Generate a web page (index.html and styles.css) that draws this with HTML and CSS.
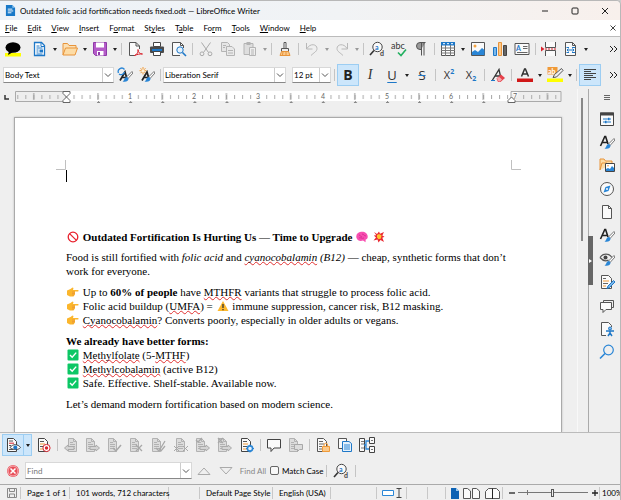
FILE: index.html
```html
<!DOCTYPE html>
<html lang="en">
<head>
  <meta charset="UTF-8">
  <meta name="viewport" content="width=device-width, initial-scale=1">
  <title>Outdated folic acid fortification needs fixed.odt — LibreOffice Writer</title>
  <link rel="stylesheet" href="styles.css">
</head>
<body>

<!-- icon sprite -->
<svg class="sprite" aria-hidden="true">
  <symbol id="page" viewBox="0 0 16 16"><path d="M3.500 1.500h6l3 3v10h-9z" fill="#fafafa" stroke="#555"/><path d="M9.500 1.500v3h3" fill="none" stroke="#555"/></symbol>
  <symbol id="bubble-note" viewBox="0 0 16 16"><path d="M0 12h16v3.500H0z" fill="#ff0"/><ellipse cx="8" cy="6.500" rx="7.500" ry="5.300" fill="#000"/><path d="M4 10l-1 4 5-3z"/></symbol>
  <symbol id="writer" viewBox="0 0 16 16"><path d="M2.500 1.500h7l3 3v10h-10z" fill="#fff" stroke="#1e78c8" stroke-width="1.300"/><path d="M9 1.500v4h4M4.500 5h3M4.500 7h6M4.500 9h2M4.500 11h2M4.500 13h6" fill="none" stroke="#1e78c8"/><path d="M7.500 8.500h3.500v3h-3.500z" fill="#1e78c8"/></symbol>
  <symbol id="folder" viewBox="0 0 16 16"><path d="M1 14V2.500h4.500l1.500 2h7V7" fill="#fbe0b5" stroke="#e8943a"/><path d="M1 14L3.500 7H15.500L13 14z" fill="#fddca6" stroke="#e8943a"/></symbol>
  <symbol id="save" viewBox="0 0 16 16"><path d="M1.500 1.500h13v13h-11l-2-2z" fill="#b45cc8" stroke="#8e3aa8"/><path d="M4 1.500h8v5H4z" fill="#fff"/><path d="M5 10h6.500v4.500H5z" fill="#fff"/><path d="M6 11h2v3H6z" fill="#8e3aa8"/></symbol>
  <symbol id="pdf" viewBox="0 0 16 16"><path d="M12.500 8V5l-3.500-3.500H2.500v13H8" fill="#fafafa" stroke="#555"/><path d="M9 1.500V5h3.500" fill="none" stroke="#555"/><path d="M7.500 14.500c3-1 4-4 3.500-6 0 3 2 4.500 4.500 4.500-2.500-.3-5 .3-8 1.500z" fill="#fff" stroke="#d8242e"/></symbol>
  <symbol id="print" viewBox="0 0 16 16"><path d="M4.500 1.500h7v4h-7z" fill="#fff" stroke="#444"/><rect x="1" y="5.500" width="14" height="6.500" rx="1" fill="#4a4a4a"/><path d="M3 8h10v2H3z" fill="#1e78c8"/><path d="M4.500 10.500h7v4h-7z" fill="#fff" stroke="#444"/></symbol>
  <symbol id="preview" viewBox="0 0 16 16"><path d="M12.500 7V4.500l-3-3h-8v13H9" fill="#fafafa" stroke="#555"/><path d="M9.500 1.500v3h3" fill="none" stroke="#555"/><circle cx="9" cy="9" r="3.200" fill="#e4f1fc" stroke="#1e78c8"/><path d="M11.500 11.500l3.500 3.500" stroke="#1e78c8" stroke-width="1.600"/></symbol>
  <symbol id="cut" viewBox="0 0 16 16"><path d="M3.500 1.500l7 10M12.500 1.500l-7 10" stroke="#aaa" fill="none"/><circle cx="4" cy="12.800" r="1.900" fill="none" stroke="#aaa"/><circle cx="12" cy="12.800" r="1.900" fill="none" stroke="#aaa"/></symbol>
  <symbol id="copy" viewBox="0 0 16 16"><path d="M1.500 1.500h6l2 2v7h-8z" fill="#e6e6e6" stroke="#b4b4b4"/><path d="M6.500 5.500h5.500l2.500 2.500v6.500h-8z" fill="#e9e9e9" stroke="#b4b4b4"/><path d="M3 4.500h3M3 6.500h2M8 9.500h5M8 12h5" stroke="#b4b4b4"/></symbol>
  <symbol id="paste" viewBox="0 0 16 16"><path d="M2 2.500h9v11H2z" fill="#dedede" stroke="#b4b4b4"/><path d="M4.500 1h4v3h-4z" fill="#b4b4b4"/><path d="M7.500 6.500h6v8h-6z" fill="#eee" stroke="#b4b4b4"/><path d="M9 9h3M9 11h3M9 13h3" stroke="#b4b4b4"/></symbol>
  <symbol id="brush" viewBox="0 0 16 16"><path d="M7 1.500h2v6H7z" fill="#fff" stroke="#555"/><path d="M4.500 7.500h7v3h-7z" fill="#eee" stroke="#555"/><path d="M4.500 10.500h7l1.500 4H3z" fill="#fbc98a" stroke="#e8943a"/><path d="M6 11l-.5 3M9 11v3" stroke="#e8943a"/></symbol>
  <symbol id="undo" viewBox="0 0 16 16"><path d="M2.500 2v6h6M3 7.500C6 2 13 3 13 7.500c0 3-3 4-6 7" fill="none" stroke="#b8b8b8"/></symbol>
  <symbol id="redo" viewBox="0 0 16 16"><path d="M13.500 2v6h-6M13 7.500C10 2 3 3 3 7.500c0 3 3 4 6 7" fill="none" stroke="#b8b8b8"/></symbol>
  <symbol id="pilcrow" viewBox="0 0 16 16"><path d="M12.500 1.500H7a3.500 3.500 0 0 0 0 7h1" fill="#999" stroke="#555"/><path d="M8.500 1.500v13M11 1.500v13" fill="none" stroke="#555"/></symbol>
  <symbol id="table" viewBox="0 0 16 16"><path d="M1.500 1.500h13v13h-13z" fill="#fff" stroke="#555"/><path d="M1 1h14v3.500H1z" fill="#1e78c8"/><path d="M1 7h14M1 9.500h14M1 12h14M5.500 4v11M10.500 4v11" stroke="#777"/><path d="M3 2.700h2M7 2.700h2M11 2.700h2" stroke="#fff"/></symbol>
  <symbol id="image" viewBox="0 0 16 16"><path d="M1.500 1.500h13v13h-13z" fill="#fafafa" stroke="#555"/><circle cx="5" cy="5" r="1.500" fill="#f4a340"/><path d="M2 14v-3l3-2 3 2 4-4 2.500 2V14z" fill="#2a86d6"/></symbol>
  <symbol id="chart" viewBox="0 0 16 16"><path d="M1.500 6.500h3v8h-3z" fill="#7cb8ea" stroke="#1e78c8"/><path d="M6.500 1.500h3v13h-3z" fill="#fbc98a" stroke="#e8943a"/><path d="M11.500 4.500h3v10h-3z" fill="#666" stroke="#444"/></symbol>
  <symbol id="break" viewBox="0 0 16 16"><path d="M4.500 1v5.500h10V1M4.500 15V9.500h10V15" fill="#fafafa" stroke="#555"/><path d="M4 8h12" stroke="#d8242e" stroke-dasharray="2 1"/><path d="M0 5.500L3.500 8 0 10.500z" fill="#d8242e"/></symbol>
  <symbol id="field" viewBox="0 0 16 16"><path d="M2.500 1.500h7l3 3v10h-10z" fill="#fafafa" stroke="#555"/><path d="M9.500 1.500v3h3" fill="none" stroke="#555"/><path d="M3.500 6.500H6M9 6.500h3M3.500 11.500H6M9 11.500h3M4 9h7M5.500 7.500L4 9l1.500 1.500M9.500 7.500L11 9l-1.500 1.500" fill="none" stroke="#1e78c8"/></symbol>
  <symbol id="brush-mini" viewBox="0 0 16 16"><path d="M15 4.500L9.500 10l1.500 1.500L16 6z" fill="#fff" stroke="#555" stroke-width=".8"/><path d="M10 10c-3 0-2 3-4.500 4.500 3 .8 6 0 6-3z" fill="#2a86d6"/></symbol>
  <symbol id="style" viewBox="0 0 16 16"><path d="M1.500 12L5.800 2.500h.8L9 10M3.300 8.500H8" fill="none" stroke="#222" stroke-width="1.600"/><use href="#brush-mini"/></symbol>
  <symbol id="style-update" viewBox="0 0 16 16"><path d="M3 13.500L8 5l2 7M5 10.500h4" fill="none" stroke="#222" stroke-width="1.700"/><path d="M1.500 6A3.500 3.500 0 0 1 7.500 2.500M7.500 5A3.500 3.500 0 0 1 2 7" fill="none" stroke="#2a86d6" stroke-width="1.300"/><use href="#brush-mini"/></symbol>
  <symbol id="style-new" viewBox="0 0 16 16"><path d="M3 13.500L8 5l2 7M5 10.500h4" fill="none" stroke="#222" stroke-width="1.700"/><path d="M4 0v7.500M.5 3.700h7M1.500 1.200l5 5M6.500 1.200l-5 5" stroke="#f09a38"/><circle cx="4" cy="3.700" r="1.500" fill="#fff3dc"/><use href="#brush-mini"/></symbol>
  <symbol id="clear" viewBox="0 0 16 16"><path d="M2.500 13L9 2.500l1.500 7M5 9h4.500" fill="none" stroke="#333" stroke-width="1.300"/><path d="M1 13.500h4" stroke="#1e78c8"/><path d="M6.500 11.500l4.500-4 4 3.500-4.500 4H8z" fill="#e6404a"/><path d="M7 11.500l2-1.800 3 2.800-2 2H8.500z" fill="#f6a6ac"/></symbol>
  <symbol id="font-color" viewBox="0 0 16 16"><path d="M4.500 9.500L7.600 2h.8l3.100 7.500M5.700 7h4.600" fill="none" stroke="#333" stroke-width="1.500"/><path d="M0 11.500h16V15H0z" fill="#d01818"/></symbol>
  <symbol id="align-left" viewBox="0 0 16 16"><path d="M2 2.500h12M2 4.500h7M2 6.500h12M2 8.500h9M2 10.500h12M2 12.500h7" stroke="#444"/></symbol>
  <symbol id="menu" viewBox="0 0 16 16"><path d="M5 5.500h6M5 7.500h6M5 9.500h6" stroke="#666"/></symbol>
  <symbol id="properties" viewBox="0 0 16 16"><path d="M1.500 2h13v12.500h-13z" fill="#fafafa" stroke="#444"/><path d="M1 1.500h14v3H1z" fill="#444"/><path d="M4 8h8M4 11h8" stroke="#1e78c8"/><path d="M9 6.800h1.500v2.400H9zM6 9.800h1.500v2.400H6z" fill="#1e78c8"/></symbol>
  <symbol id="gallery" viewBox="0 0 16 16"><path d="M1 13V2h4l1.500 2H13v3" fill="#fddca6" stroke="#e8943a"/><path d="M1 13l2-7h5" fill="none" stroke="#e8943a"/><path d="M6.500 6.500h9v8h-9z" fill="#fff" stroke="#444"/><path d="M7 14v-2l2-1 2 1 2-3 2 2v3z" fill="#2a86d6"/><circle cx="9" cy="8.700" r=".8" fill="#f09a38"/></symbol>
  <symbol id="compass" viewBox="0 0 16 16"><circle cx="8" cy="8" r="6.500" fill="#fafafa" stroke="#555"/><path d="M11.500 4.500L9.500 10l-5 1.500L6.500 6z" fill="#2a86d6"/><circle cx="8" cy="8" r="1" fill="#fff"/></symbol>
  <symbol id="inspect" viewBox="0 0 16 16"><path d="M1 6.500c3-4.500 9-4.500 12 0M1 6.500C4 10 7 10.500 9.500 9" fill="none" stroke="#555" stroke-width="1.200"/><circle cx="6.500" cy="6.500" r="2" fill="#444"/><use href="#brush-mini"/></symbol>
  <symbol id="changes" viewBox="0 0 16 16"><path d="M2.500 1.500h7l3 3v10h-10z" fill="#fafafa" stroke="#555"/><path d="M4 4.500h3M4 9.500h5" stroke="#666"/><path d="M4 7h6M4 12h3" stroke="#f09a38"/><path d="M14.500 6.500L9 12l-1 2.500 2.500-1 5.500-5.500z" fill="#7cb8ea" stroke="#1e78c8"/></symbol>
  <symbol id="comments" viewBox="0 0 16 16"><path d="M4.500 4V2.500h10v7h-2" fill="none" stroke="#555"/><path d="M1.500 4.500h11v7H7l-3 3v-3H1.500z" fill="#fafafa" stroke="#555"/></symbol>
  <symbol id="access" viewBox="0 0 16 16"><path d="M12.500 6V4.500l-3-3h-7v13H7" fill="#fafafa" stroke="#555"/><circle cx="11" cy="7.500" r="1.500" fill="#7cb8ea" stroke="#1e78c8"/><path d="M7 10h8M11 10v2.500M9 15l2-3 2 3" fill="none" stroke="#1e78c8" stroke-width="1.500"/></symbol>
  <symbol id="search" viewBox="0 0 16 16"><circle cx="9.500" cy="6" r="4.800" fill="none" stroke="#2a86d6" stroke-width="1.200"/><path d="M6 9.500L1 14.500" stroke="#2a86d6" stroke-width="1.600"/></symbol>

  <symbol id="track" viewBox="0 0 16 16"><path d="M2.500 1.500h6l3 3v10h-9z" fill="#fafafa" stroke="#444"/><path d="M4 4h4M4 8.500h2M4 12.500h4" stroke="#555"/><path d="M4 6.200h5" stroke="#d8242e"/><path d="M5 10.500c3-4 8-3.500 10.500 0-2 2.500-7 3-10.500 0z" fill="#fff" stroke="#444"/><circle cx="10.300" cy="10.500" r="2" fill="#1e78c8"/></symbol>
  <symbol id="record" viewBox="0 0 16 16"><path d="M2.500 1.500h6l3 3v10h-9z" fill="#fafafa" stroke="#444"/><path d="M4 4.500h4M4 9.500h3" stroke="#555"/><path d="M4 7h5M4 12h3" stroke="#f09a38"/><circle cx="10.500" cy="11" r="3.600" fill="#fff" stroke="#d8242e"/><circle cx="10.500" cy="11" r="1.700" fill="#d8242e"/></symbol>
  <symbol id="gdoc" viewBox="0 0 16 16"><path d="M3.500 1.500h5l3 3v10h-8z" fill="#dcdcdc" stroke="#b2b2b2"/><path d="M8.500 1.500v3h3M5 5.500h3M5 7.500h5M5 9.500h5M5 11.500h5" fill="none" stroke="#b2b2b2"/></symbol>
  <symbol id="g-prev" viewBox="0 0 16 16"><use href="#gdoc" x="2"/><path d="M1.500 11l3.500-3v1.500h6v3H5V14z" fill="#d4d4d4" stroke="#aaa"/></symbol>
  <symbol id="g-next" viewBox="0 0 16 16"><use href="#gdoc" x="-2"/><path d="M14.500 11L11 8v1.500H5v3h6V14z" fill="#d4d4d4" stroke="#aaa"/></symbol>
  <symbol id="g-accept" viewBox="0 0 16 16"><use href="#gdoc" x="-2"/><path d="M6 11l3 3 5-6" fill="none" stroke="#a8a8a8" stroke-width="1.500"/></symbol>
  <symbol id="g-reject" viewBox="0 0 16 16"><use href="#gdoc" x="-2"/><path d="M7 8l6 6M13 8l-6 6" stroke="#a8a8a8" stroke-width="1.300"/></symbol>
  <symbol id="g-accept-all" viewBox="0 0 16 16"><use href="#gdoc" x="-2"/><path d="M5 11l3 3 6-10M8 11l2 3 4-5" fill="none" stroke="#a8a8a8" stroke-width="1.300"/></symbol>
  <symbol id="g-reject-all" viewBox="0 0 16 16"><use href="#gdoc"/><path d="M1 9l5 5M6 9l-5 5M10 9l5 5M15 9l-5 5" stroke="#a8a8a8"/></symbol>
  <symbol id="g-accept-next" viewBox="0 0 16 16"><use href="#g-next"/><path d="M1 3l2 2 4-4" fill="none" stroke="#a8a8a8" stroke-width="1.300"/></symbol>
  <symbol id="g-reject-next" viewBox="0 0 16 16"><use href="#g-next"/><path d="M1 1l5 5M6 1L1 6" stroke="#a8a8a8" stroke-width="1.300"/></symbol>
  <symbol id="manage" viewBox="0 0 16 16"><path d="M2.500 1.500h6l3 3v10h-9z" fill="#fafafa" stroke="#444"/><path d="M4 4.500h4M4 9.500h4" stroke="#555"/><path d="M4 7h5M4 12h4" stroke="#f09a38"/><circle cx="11" cy="11.500" r="2.600" fill="#e4f1fc" stroke="#2a86d6" stroke-width="1.600"/><path d="M11 7.500v1.500M11 14v1.500M7 11.500h1.500M13.500 11.500h1.500" stroke="#2a86d6"/></symbol>
  <symbol id="comment" viewBox="0 0 16 16"><path d="M1.500 2.500h13v8.500H8l-3 3.500V11H1.500z" fill="#fafafa" stroke="#444"/></symbol>
  <symbol id="g-comment" viewBox="0 0 16 16"><use href="#gdoc" x="-2"/><path d="M6.500 7.500h8v5h-3l-2 2v-2h-3z" fill="#dcdcdc" stroke="#a8a8a8"/></symbol>
  <symbol id="protect" viewBox="0 0 16 16"><path d="M2.500 1.500h6l3 3v10h-9z" fill="#fafafa" stroke="#555"/><path d="M4 4.500h4M4 7h5M4 9.500h3M4 12h3" stroke="#666"/><path d="M9 9.500V8a1.800 1.800 0 0 1 3.600 0v1.500" fill="none" stroke="#f09a38"/><path d="M7.500 9.500h7v5h-7z" fill="#fbc98a" stroke="#f09a38"/></symbol>
  <symbol id="compare" viewBox="0 0 16 16"><path d="M1.500 1.500h8v10h-8z" fill="#fafafa" stroke="#555"/><path d="M5.500 4.500h6.500l2.500 2v8h-9z" fill="#e4f1fc" stroke="#1e78c8"/><path d="M7 8h6M7 10h6M7 12h6" stroke="#2a86d6"/></symbol>
  <symbol id="merge" viewBox="0 0 16 16"><path d="M.5 1.500h5v13h-5zM10.500 .5h5v6h-5zM10.500 9.500h5v6h-5z" fill="#fafafa" stroke="#444"/><path d="M2 4.500h3M2 7h3M2 11h3M12 3.500h2M12 12.500h2" stroke="#777"/><path d="M10 4H7v8h3M5 8h2" fill="none" stroke="#2a86d6" stroke-width="1.300"/></symbol>

  <symbol id="e-no" viewBox="0 0 12 12"><circle cx="6" cy="6" r="4.800" fill="#fff" stroke="#e8222e" stroke-width="1.300"/><path d="M2.600 2.600l6.800 6.800" stroke="#e8222e" stroke-width="1.300"/></symbol>
  <symbol id="e-point" viewBox="0 0 12 12"><path d="M0 4.500L3.500 3 5.500 1.500l1 .5L6 4h5.200q.8.700 0 1.500H8L8 8.500 6.500 10.500H3L0 9z" fill="#fbb62c"/><path d="M5 6h3M5 7.500h3M5 9h2" stroke="#e8923a" stroke-width=".7"/></symbol>
  <symbol id="e-warn" viewBox="0 0 12 12"><path d="M6 1l5.500 10H.5z" fill="#fdb92e"/><path d="M6 4v4M6 9v1.200" stroke="#333" stroke-width="1.300"/></symbol>
  <symbol id="e-check" viewBox="0 0 12 12"><rect x=".5" y=".5" width="11" height="11" rx="1" fill="#0cc765"/><path d="M3 6l2.200 2.300L9.200 3.600" fill="none" stroke="#fff" stroke-width="1.400"/></symbol>
  <symbol id="e-brain" viewBox="0 0 12 12"><path d="M.5 7C-.5 3.500 2 1 5 .8c4-.5 7 2 6.700 5.200 0 1.500-1 2.500-2 2.600L9.500 11.200 7 9.500C4 10.500 1.500 9.500.5 7z" fill="#f74fb0"/><path d="M3 4c2 0 1 2 3 2M6 3c2 0 2 2 4 2M3 7c1-1 3 1 5 0" fill="none" stroke="#d0208a" stroke-width=".7"/></symbol>
  <symbol id="e-boom" viewBox="0 0 12 12"><path d="M1 1l3 2L6 .5l1 2.300L11 1 9.300 4.500l2.200 1.200-2.200 1L11 11 7.500 9 5.500 11.500 4.500 8.500.5 9.500 3 6.500.8 4.500l2.500-.2z" fill="#ea2830"/><path d="M4 4l2-1 2.500 1.200L8 7.500l-2.500.8L4 6.500z" fill="#fdc52e"/></symbol>
</svg>

<div class="window">
  <header class="titlebar">
    <svg class="app-icon" viewBox="0 0 12 12"><path d="M1 0h7l3 3v9H1z" fill="#1878c8"/><path d="M8 0v3h3z" fill="#8fc6f2"/><path d="M3 4.500h5M3 6.500h6M3 8.500h4" stroke="#fff"/></svg>
    <h1>Outdated folic acid fortification needs fixed.odt — LibreOffice Writer</h1>
    <div class="window-buttons">
      <button aria-label="Minimize"><svg viewBox="0 0 8 8"><path d="M1 4h6" stroke="#222"/></svg></button>
      <button aria-label="Maximize"><svg viewBox="0 0 8 8"><rect x="1" y="1" width="6" height="6" rx="1" fill="none" stroke="#222"/></svg></button>
      <button aria-label="Close"><svg viewBox="0 0 8 8"><path d="M1 1l6 6M7 1L1 7" stroke="#222"/></svg></button>
    </div>
  </header>

  <nav class="menubar">
    <button><u>F</u>ile</button>
    <button><u>E</u>dit</button>
    <button><u>V</u>iew</button>
    <button><u>I</u>nsert</button>
    <button>F<u>o</u>rmat</button>
    <button>St<u>y</u>les</button>
    <button>T<u>a</u>ble</button>
    <button>Fo<u>r</u>m</button>
    <button><u>T</u>ools</button>
    <button><u>W</u>indow</button>
    <button><u>H</u>elp</button>
    <button class="close-doc" aria-label="Close document"><svg viewBox="0 0 8 8"><path d="M1.500 1.500l5 5M6.500 1.500l-5 5" stroke="#444"/></svg></button>
  </nav>

  <div class="toolbar">
    <button class="tool"><svg><use href="#bubble-note"/></svg></button>
    <span class="space"></span>
    <button class="tool"><svg><use href="#writer"/></svg></button><button class="drop"></button>
    <button class="tool"><svg><use href="#folder"/></svg></button><button class="drop"></button>
    <button class="tool"><svg><use href="#save"/></svg></button><button class="drop"></button>
    <span class="sep"></span>
    <button class="tool"><svg><use href="#pdf"/></svg></button>
    <button class="tool"><svg><use href="#print"/></svg></button>
    <button class="tool"><svg><use href="#preview"/></svg></button>
    <span class="sep"></span>
    <button class="tool"><svg><use href="#cut"/></svg></button>
    <button class="tool"><svg><use href="#copy"/></svg></button>
    <button class="tool"><svg><use href="#paste"/></svg></button><button class="drop off"></button>
    <span class="sep"></span>
    <button class="tool"><svg><use href="#brush"/></svg></button>
    <span class="sep"></span>
    <button class="tool"><svg><use href="#undo"/></svg></button><button class="drop off"></button>
    <button class="tool"><svg><use href="#redo"/></svg></button><button class="drop off"></button>
    <span class="sep"></span>
    <button class="tool" aria-label="Find and replace"><svg viewBox="0 0 16 16"><circle cx="8.500" cy="6" r="4.700" fill="#fafafa" stroke="#444"/><path d="M5 9.500L1 14" stroke="#333" stroke-width="1.600"/><text x="6" y="8.500" class="ic-a">a</text><text x="11" y="15" class="ic-d">d</text></svg></button>
    <button class="tool" aria-label="Spelling"><svg viewBox="0 0 16 16"><text x="0" y="7.500" class="ic-abc">abc</text><path d="M7 11.500l3 3 5-6" fill="none" stroke="#22b060" stroke-width="1.600"/></svg></button>
    <button class="tool"><svg><use href="#pilcrow"/></svg></button>
    <span class="sep"></span>
    <button class="tool"><svg><use href="#table"/></svg></button><button class="drop"></button>
    <button class="tool"><svg><use href="#image"/></svg></button>
    <button class="tool"><svg><use href="#chart"/></svg></button>
    <button class="tool" aria-label="Text box"><svg viewBox="0 0 16 16"><path d="M1 2.500h14v11H1z" fill="#fafafa" stroke="#555"/><text x="2" y="10" class="ic-a">A</text><path d="M9 5.500h4.500M9 7.500h4.500M3 11.500h10.500" stroke="#666"/></svg></button>
    <span class="sep"></span>
    <button class="tool"><svg><use href="#break"/></svg></button>
    <button class="tool"><svg><use href="#field"/></svg></button><button class="drop"></button>
    <button class="more" aria-label="More"><svg viewBox="0 0 8 8"><path d="M0 1l3 3-3 3M4 1l3 3-3 3" fill="none" stroke="#222"/></svg></button>
  </div>

  <div class="toolbar format">
    <select class="combo style-box" aria-label="Paragraph style"><option>Body Text</option></select>
    <button class="tool"><svg><use href="#style-update"/></svg></button>
    <button class="tool"><svg><use href="#style-new"/></svg></button>
    <span class="sep"></span>
    <select class="combo font-box" aria-label="Font name"><option>Liberation Serif</option></select>
    <select class="combo size-box" aria-label="Font size"><option>12 pt</option></select>
    <span class="sep"></span>
    <button class="tool active glyph bold">B</button>
    <button class="tool glyph italic">I</button>
    <button class="tool glyph underline">U</button><button class="drop"></button>
    <button class="tool glyph strike">S</button>
    <span class="sep"></span>
    <button class="tool script-x">X<sup>2</sup></button>
    <button class="tool script-x">X<sub>2</sub></button>
    <span class="sep"></span>
    <button class="tool"><svg><use href="#clear"/></svg></button>
    <span class="sep"></span>
    <button class="tool"><svg><use href="#font-color"/></svg></button><button class="drop"></button>
    <button class="tool" aria-label="Highlighting"><svg viewBox="0 0 16 16"><path d="M.5 0h10v7.500H.5z" fill="#f09a38"/><text x="1" y="6.500" class="ic-ab">ab</text><path d="M14.500 1.500l-7 6-1.500 3 3.500-.5L16 3.500z" fill="#eee" stroke="#555"/><path d="M0 11.500h16V15H0z" fill="#ff0"/></svg></button><button class="drop"></button>
    <span class="sep"></span>
    <button class="tool active"><svg><use href="#align-left"/></svg></button>
    <button class="more" aria-label="More"><svg viewBox="0 0 8 8"><path d="M0 1l3 3-3 3M4 1l3 3-3 3" fill="none" stroke="#222"/></svg></button>
  </div>

  <div class="workspace">
    <div class="editor">
      <div class="ruler">
        <svg class="tab-type" viewBox="0 0 6 6"><path d="M1 1v4h4" fill="none" stroke="#333" stroke-width="1.500"/></svg>
        <svg class="scale" aria-hidden="true">
          <defs>
            <pattern id="eighth" x="50.500" width="8.030" height="14" patternUnits="userSpaceOnUse"><path d="M.5 5v4" stroke="#aaa"/></pattern>
            <pattern id="half" x="50.500" width="64.200" height="14" patternUnits="userSpaceOnUse"><path d="M32.500 3v7" stroke="#999"/></pattern>
            <pattern id="stops" x="50" width="32.100" height="14" patternUnits="userSpaceOnUse"><path d="M0 12.500h3M1.500 11v2" stroke="#888"/></pattern>
          </defs>
          <rect x="51" y="1" width="445" height="10" fill="#fff"/>
          <path d="M51 1.500H.5v10H51M496 1.500h50v10h-50z" fill="#eee" stroke="#aaa"/>
          <rect x="2" width="543" height="14" fill="url(#eighth)"/>
          <rect x="2" width="543" height="14" fill="url(#half)"/>
          <rect x="82" width="410" height="14" fill="url(#stops)"/>
          <g class="marks">
            <text x="115" y="9">1</text>
            <text x="179" y="9">2</text>
            <text x="243" y="9">3</text>
            <text x="308" y="9">4</text>
            <text x="372" y="9">5</text>
            <text x="436" y="9">6</text>
            <text x="500" y="9">7</text>
          </g>
          <path d="M48 1.500h7v2l-3.500 3.500L48 3.500zM48 12.500h7v-2L51.500 7 48 10.500z" fill="#fff" stroke="#666"/>
          <path d="M493 12.500h7v-2L496.500 7 493 10.500z" fill="#fff" stroke="#666"/>
        </svg>
      </div>

      <article class="page">
        <div class="corners">
          <svg viewBox="0 0 10 10"><path d="M0 9.500h9.500V0" fill="none" stroke="#c0c0c0"/></svg>
          <svg viewBox="0 0 10 10"><path d="M10 9.500H.5V0" fill="none" stroke="#c0c0c0"/></svg>
        </div>
        <div class="caret"></div>
        <h2><svg class="emoji"><use href="#e-no"/></svg> Outdated Fortification Is Hurting Us — Time to Upgrade <svg class="emoji"><use href="#e-brain"/></svg> <svg class="emoji"><use href="#e-boom"/></svg></h2>
        <p>Food is still fortified with <i>folic acid</i> and <i><span class="typo">cyanocobalamin</span> (B12)</i> — cheap, synthetic forms that don’t work for everyone.</p>
        <p>
          <svg class="emoji"><use href="#e-point"/></svg> Up to <b>60% of people</b> have <span class="typo">MTHFR</span> variants that struggle to process folic acid.<br>
          <svg class="emoji"><use href="#e-point"/></svg> Folic acid buildup (<span class="typo">UMFA</span>) = <svg class="emoji"><use href="#e-warn"/></svg> immune suppression, cancer risk, B12 masking.<br>
          <svg class="emoji"><use href="#e-point"/></svg> <span class="typo">Cyanocobalamin</span>? Converts poorly, especially in older adults or vegans.
        </p>
        <p>
          <b>We already have better forms:</b><br>
          <svg class="emoji"><use href="#e-check"/></svg> <span class="typo">Methylfolate</span> (5-<span class="typo">MTHF</span>)<br>
          <svg class="emoji"><use href="#e-check"/></svg> <span class="typo">Methylcobalamin</span> (active B12)<br>
          <svg class="emoji"><use href="#e-check"/></svg> Safe. Effective. Shelf-stable. Available now.
        </p>
        <p>Let’s demand modern fortification based on modern science.</p>
      </article>
    </div>

    <div class="scrollbar"><div class="thumb"></div></div>
    <div class="splitter"><button aria-label="Hide sidebar"></button></div>

    <aside class="sidebar">
      <button><svg><use href="#menu"/></svg></button>
      <div class="decks">
        <button><svg><use href="#properties"/></svg></button>
        <button><svg><use href="#style"/></svg></button>
        <button><svg><use href="#gallery"/></svg></button>
        <button><svg><use href="#compass"/></svg></button>
        <button><svg><use href="#page"/></svg></button>
        <button><svg><use href="#style"/></svg></button>
        <button><svg><use href="#inspect"/></svg></button>
        <button><svg><use href="#changes"/></svg></button>
        <button><svg><use href="#comments"/></svg></button>
        <button><svg><use href="#access"/></svg></button>
        <button><svg><use href="#search"/></svg></button>
      </div>
    </aside>
  </div>

  <div class="toolbar review">
    <button class="tool active"><svg><use href="#track"/></svg></button><button class="drop active"></button>
    <button class="tool"><svg><use href="#record"/></svg></button>
    <span class="sep"></span>
    <button class="tool"><svg><use href="#g-prev"/></svg></button>
    <button class="tool"><svg><use href="#g-next"/></svg></button>
    <button class="tool"><svg><use href="#g-accept"/></svg></button>
    <button class="tool"><svg><use href="#g-reject"/></svg></button>
    <button class="tool"><svg><use href="#g-accept-all"/></svg></button>
    <button class="tool"><svg><use href="#g-reject-all"/></svg></button>
    <button class="tool"><svg><use href="#g-accept-next"/></svg></button>
    <button class="tool"><svg><use href="#g-reject-next"/></svg></button>
    <button class="tool"><svg><use href="#manage"/></svg></button>
    <span class="sep"></span>
    <button class="tool"><svg><use href="#comment"/></svg></button>
    <button class="tool"><svg><use href="#g-comment"/></svg></button>
    <span class="sep"></span>
    <button class="tool"><svg><use href="#protect"/></svg></button>
    <button class="tool"><svg><use href="#compare"/></svg></button>
    <button class="tool"><svg><use href="#merge"/></svg></button>
  </div>

  <div class="toolbar findbar">
    <button class="tool" aria-label="Close find bar"><svg viewBox="0 0 16 16"><circle cx="8" cy="8" r="6" fill="#e8505a"/><circle cx="8" cy="8" r="5" fill="none" stroke="#f8b4b8"/><path d="M5.500 5.500l5 5M10.500 5.500l-5 5" stroke="#fff" stroke-width="1.500"/></svg></button>
    <div class="find-box">
      <input type="text" placeholder="Find" aria-label="Find">
      <button aria-label="Search history"><svg viewBox="0 0 8 8"><path d="M1 2.500l3 3 3-3" fill="none" stroke="#555"/></svg></button>
    </div>
    <button class="tool" aria-label="Find previous"><svg viewBox="0 0 16 16"><path d="M2 11.500L8 5l6 6.500z" fill="none" stroke="#aaa"/></svg></button>
    <button class="tool" aria-label="Find next"><svg viewBox="0 0 16 16"><path d="M2 4.500L8 11l6-6.500z" fill="none" stroke="#aaa"/></svg></button>
    <button class="find-all">Find All</button>
    <input type="checkbox" id="match-case"><label for="match-case">Match Case</label>
    <span class="sep"></span>
    <button class="tool find-replace" aria-label="Find and replace"><svg viewBox="0 0 16 16"><circle cx="8.500" cy="6" r="4.700" fill="#fafafa" stroke="#444"/><path d="M5 9.500L1 14" stroke="#333" stroke-width="1.600"/><text x="6" y="8.500" class="ic-a">a</text><text x="11" y="15" class="ic-d">d</text></svg></button>
    <span class="sep"></span>
  </div>

  <footer class="statusbar">
    <span class="cell save-cell"><svg viewBox="0 0 12 12"><path d="M1.500 1.500h9v9h-9z" fill="#eee" stroke="#888"/><path d="M3.500 1.500v3h5v-3M3.500 10.500V7h5v3.500" fill="none" stroke="#888"/></svg></span>
    <span class="cell page-cell">Page 1 of 1</span>
    <span class="cell words-cell">101 words, 712 characters</span>
    <span class="cell blank-cell"></span>
    <span class="cell style-cell">Default Page Style</span>
    <span class="cell lang-cell">English (USA)</span>
    <span class="cell flex-cell"></span>
    <span class="cell insert-cell"><svg viewBox="0 0 22 12"><path d="M1.500 3.500h11v5h-11z" fill="#fff" stroke="#2a86d6"/><path d="M15.500 1.500h5M15.500 10.500h5M18 1.500v9" fill="none" stroke="#444"/></svg></span>
    <span class="cell sign-cell"></span>
    <span class="cell sel-cell"></span>
    <span class="cell view-cell"><svg viewBox="0 0 52 12"><path d="M1 1h5l3 3v8H1z" fill="#0d62b4"/><path d="M6 1v3h3z" fill="#9ccaf0"/><path d="M13.500 1.500h4l3 2.500v7.500h-7zM22.500 1.500h4l3 2.500v7.500h-7z" fill="#fafafa" stroke="#555"/><path d="M42.500 1.500h4l3 3v7h-7zM42.500 1.500h-4l-3 3v7h7z" fill="#fafafa" stroke="#555"/><path d="M42.500 1.500V12" stroke="#222"/></svg></span>
    <span class="cell zoom-cell">
      <button aria-label="Zoom out"><svg viewBox="0 0 8 8"><path d="M1 4h6" stroke="#222" stroke-width="1.300"/></svg></button>
      <input type="range" min="0" max="100" value="49" aria-label="Zoom">
      <button aria-label="Zoom in"><svg viewBox="0 0 8 8"><path d="M1 4h6M4 1v6" stroke="#222" stroke-width="1.300"/></svg></button>
    </span>
    <span class="percent">100%</span>
  </footer>
</div>

</body>
</html>
```
FILE: styles.css
```css
* {
  box-sizing: border-box;
}

body {
  margin: 0;
  font-family: Lato, "Open Sans", sans-serif;
  font-size: 8px;
  color: #000;
  background-color: #ccc;
}

button {
  border: 0;
  padding: 0;
  background: none;
  font: inherit;
  color: inherit;
}

svg {
  display: block;
}

.sprite {
  position: absolute;
  width: 0;
  height: 0;
}

.window {
  height: 100vh;
  display: flex;
  flex-direction: column;
  overflow: hidden;
  background-color: #efefef;
  border-top: 1px solid #b8b8b8;
  border-right: 1px solid #b8b8b8;
  border-radius: 0 5px 0 0;
}

/* title and menu */
.titlebar {
  flex: none;
  height: 19px;
  display: flex;
  align-items: center;
  gap: 4px;
  padding-left: 5px;
  background: linear-gradient(to right, #edf2f8, #f1f3f5 55%, #f8f0ec);
}

.titlebar h1 {
  flex: 1;
  margin: 0;
  font-size: 8px;
  font-weight: normal;
  white-space: nowrap;
}

.app-icon {
  width: 11px;
  height: 11px;
}

.window-buttons {
  display: flex;
}

.window-buttons button {
  width: 30px;
  display: flex;
  justify-content: center;
}

.window-buttons svg {
  width: 8px;
  height: 8px;
}

.menubar {
  flex: none;
  height: 17px;
  display: flex;
  align-items: center;
  gap: 10px;
  padding: 0 3px 0 5px;
  background-color: #fff;
  border-bottom: 1px solid #bbb;
}

.menubar u {
  text-underline-offset: 1px;
}

.close-doc {
  margin-left: auto;
}

.close-doc svg {
  width: 8px;
  height: 8px;
}

/* toolbars */
.toolbar {
  flex: none;
  height: 24px;
  display: flex;
  align-items: center;
  padding-left: 2px;
}

.toolbar.format {
  height: 28px;
  padding-left: 3px;
}

.tool {
  flex: none;
  width: 22px;
  height: 22px;
  display: flex;
  align-items: center;
  justify-content: center;
}

.tool svg,
.sidebar svg {
  width: 16px;
  height: 16px;
  overflow: visible;
}

.active {
  background-color: #cce6fb;
  border: 1px solid #9ccdf2;
}

.drop {
  flex: none;
  width: 8px;
  height: 22px;
}

.drop::before {
  content: "";
  display: block;
  width: 0;
  margin: 0 auto;
  border: 2px solid transparent;
  border-top: 3px solid #222;
  border-bottom: 0;
}

.drop.off::before {
  border-top-color: #999;
}

.sep {
  flex: none;
  width: 1px;
  height: 12px;
  margin: 0 2px;
  background-color: #c4c4c4;
}

.space {
  width: 5px;
}

.more {
  margin-left: auto;
  margin-right: 2px;
}

.more svg {
  width: 8px;
  height: 8px;
}

.ic-a {
  font-size: 7px;
  font-weight: bold;
  fill: #1e78c8;
}

.ic-d {
  font-size: 7px;
  font-weight: bold;
  fill: #444;
}

.ic-abc {
  font-size: 9px;
  fill: #333;
}

.ic-ab {
  font-size: 7px;
  font-weight: bold;
  fill: #fff;
}

.combo {
  appearance: none;
  height: 16px;
  padding: 0 1px;
  border: 1px solid #d8d8d8;
  border-bottom-color: #888;
  border-radius: 0;
  color: #000;
  font: inherit;
  background: #fff url("data:image/svg+xml,%3Csvg xmlns='http://www.w3.org/2000/svg' width='11' height='14'%3E%3Cpath d='M.5 0v14' stroke='%23ccc'/%3E%3Cpath d='M3 5.500l3 3 3-3' fill='none' stroke='%23555'/%3E%3C/svg%3E") no-repeat right;
}

.style-box {
  width: 111px;
}

.font-box {
  width: 123px;
}

.size-box {
  width: 39px;
  margin: 0 1px 0 6px;
}

.glyph {
  font-family: "Open Sans", sans-serif;
  font-size: 13px;
  line-height: 20px;
  color: #333;
}

.bold {
  font-size: 14px;
  font-weight: bold;
  color: #222;
}

.italic {
  font-family: "Liberation Serif", serif;
  font-style: italic;
  font-size: 14px;
}

.underline {
  text-decoration: underline 1px #1e78c8;
  text-underline-offset: 2px;
}

.strike {
  text-decoration: line-through 1px #1e78c8;
}

.script-x {
  font-family: "Open Sans", sans-serif;
  font-size: 11px;
  line-height: 20px;
  color: #333;
}

.script-x sup,
.script-x sub {
  font-size: 7px;
  font-weight: bold;
  line-height: 0;
  color: #1e78c8;
}

.script-x sup {
  padding-bottom: 7px;
}

.script-x sub {
  padding-top: 7px;
}

/* document */
.workspace {
  flex: 1;
  min-height: 0;
  display: flex;
  border-bottom: 1px solid #bbb;
}

.editor {
  flex: 1;
  min-width: 0;
  display: flex;
  flex-direction: column;
  overflow: hidden;
}

.ruler {
  flex: none;
  display: flex;
  align-items: center;
  gap: 5px;
  height: 14px;
  margin: 1px 0 13px;
  padding-left: 4px;
}

.tab-type {
  width: 6px;
  height: 6px;
}

.scale {
  flex: 1;
  height: 14px;
}

.marks text {
  font-size: 7px;
  text-anchor: middle;
  fill: #666;
  stroke: #fff;
  stroke-width: 2px;
  paint-order: stroke;
}

.page {
  flex: 1;
  margin: 0 3px 0 14px;
  padding: 42px 50px 0 51px;
  background-color: #fff;
  border: 1px solid #aaa;
  border-width: 1px 1px 0;
  box-shadow: 0 0 2px #bbb;
  color: #000;
  font-family: "Liberation Serif", serif;
  font-size: 11px;
  line-height: 14px;
}

.corners {
  display: flex;
  justify-content: space-between;
  margin: 0 -10px;
}

.corners svg {
  width: 10px;
  height: 10px;
}

.caret {
  width: 1px;
  height: 12px;
  margin-bottom: 48px;
  background-color: #000;
}

.page h2,
.page p {
  margin: 0 0 6px;
  font-size: 11px;
}

.page p {
  margin-bottom: 7px;
}

.emoji {
  display: inline-block;
  width: 12px;
  height: 12px;
  margin: 0 1px;
  vertical-align: -2px;
}

.typo {
  text-decoration: underline wavy #e03030 1px;
  text-decoration-skip-ink: none;
  text-underline-offset: 0;
}

.scrollbar {
  width: 23px;
  padding: 9px 5px 0 0;
  background: linear-gradient(to right, transparent 12px, #f8f8f8 12px, #f8f8f8 13px, transparent 13px);
}

.thumb {
  width: 2px;
  height: 143px;
  margin-left: auto;
  background-color: #888;
}

.splitter {
  width: 5px;
  display: flex;
  flex-direction: column;
  justify-content: center;
  border-left: 1px solid #aaa;
}

.splitter button {
  width: 5px;
  height: 49px;
  margin-left: -1px;
  background-color: #666;
}

.splitter button::before {
  content: "";
  display: block;
  width: 0;
  margin-left: 1px;
  border: 2px solid transparent;
  border-left: 3px solid #fff;
  border-right: 0;
}

.sidebar {
  width: 27px;
  display: flex;
  flex-direction: column;
}

.sidebar button {
  display: flex;
  align-items: center;
  justify-content: center;
  height: 18px;
}

.decks {
  height: 257px;
  display: flex;
  flex-direction: column;
}

.decks button {
  flex: 1;
}

/* bottom bars */
.review .drop.active {
  border-left: 0;
  margin-right: 1px;
}

.findbar {
  height: 27px;
}

.find-box {
  width: 167px;
  height: 17px;
  display: flex;
  margin: 0 1px;
  background-color: #fff;
  border: 1px solid #d8d8d8;
  border-bottom-color: #888;
}

.find-box input {
  flex: 1;
  min-width: 0;
  border: 0;
  padding: 0 1px;
  background: none;
  font: inherit;
}

.find-box input::placeholder {
  color: #777;
}

.find-box button {
  width: 11px;
  border-left: 1px solid #ccc;
}

.find-box svg {
  width: 8px;
  height: 8px;
  margin: 0 auto;
}

.find-all {
  width: 32px;
  color: #888;
}

.findbar input[type="checkbox"] {
  appearance: none;
  width: 9px;
  height: 9px;
  margin: 0 3px 0 1px;
  border: 1px solid #666;
  border-radius: 2px;
  background-color: #f8f8f8;
}

.findbar label {
  width: 42px;
  white-space: nowrap;
}

.findbar .find-replace {
  margin: 0 1px;
}

.statusbar {
  flex: none;
  height: 16px;
  display: flex;
  align-items: center;
  border-top: 1px solid #aaa;
  white-space: nowrap;
}

.cell {
  flex: none;
  height: 12px;
  display: flex;
  align-items: center;
  padding-left: 6px;
  border-right: 1px solid #c8c8c8;
}

.cell svg {
  height: 12px;
}

.save-cell {
  width: 21px;
}

.page-cell {
  width: 49px;
}

.words-cell {
  width: 99px;
}

.blank-cell {
  width: 31px;
}

.style-cell {
  width: 73px;
}

.lang-cell {
  width: 58px;
}

.flex-cell {
  flex: 1;
}

.insert-cell {
  width: 30px;
  padding-left: 4px;
}

.sign-cell {
  width: 21px;
}

.sel-cell {
  width: 18px;
}

.view-cell {
  width: 57px;
  padding-left: 4px;
}

.zoom-cell {
  width: 97px;
  padding-left: 5px;
  gap: 3px;
}

.zoom-cell button svg {
  width: 8px;
  height: 8px;
}

.zoom-cell input {
  appearance: none;
  flex: 1;
  min-width: 0;
  height: 8px;
  margin: 0 0 0 -1px;
  background: linear-gradient(#777, #777) center / 100% 1px no-repeat,
    linear-gradient(#777, #777) 9px center / 1px 5px no-repeat;
}

.zoom-cell input::-webkit-slider-thumb {
  appearance: none;
  width: 3px;
  height: 8px;
  border: 1px solid #555;
  background-color: #eee;
}

.percent {
  width: 20px;
  padding-left: 2px;
}
```
